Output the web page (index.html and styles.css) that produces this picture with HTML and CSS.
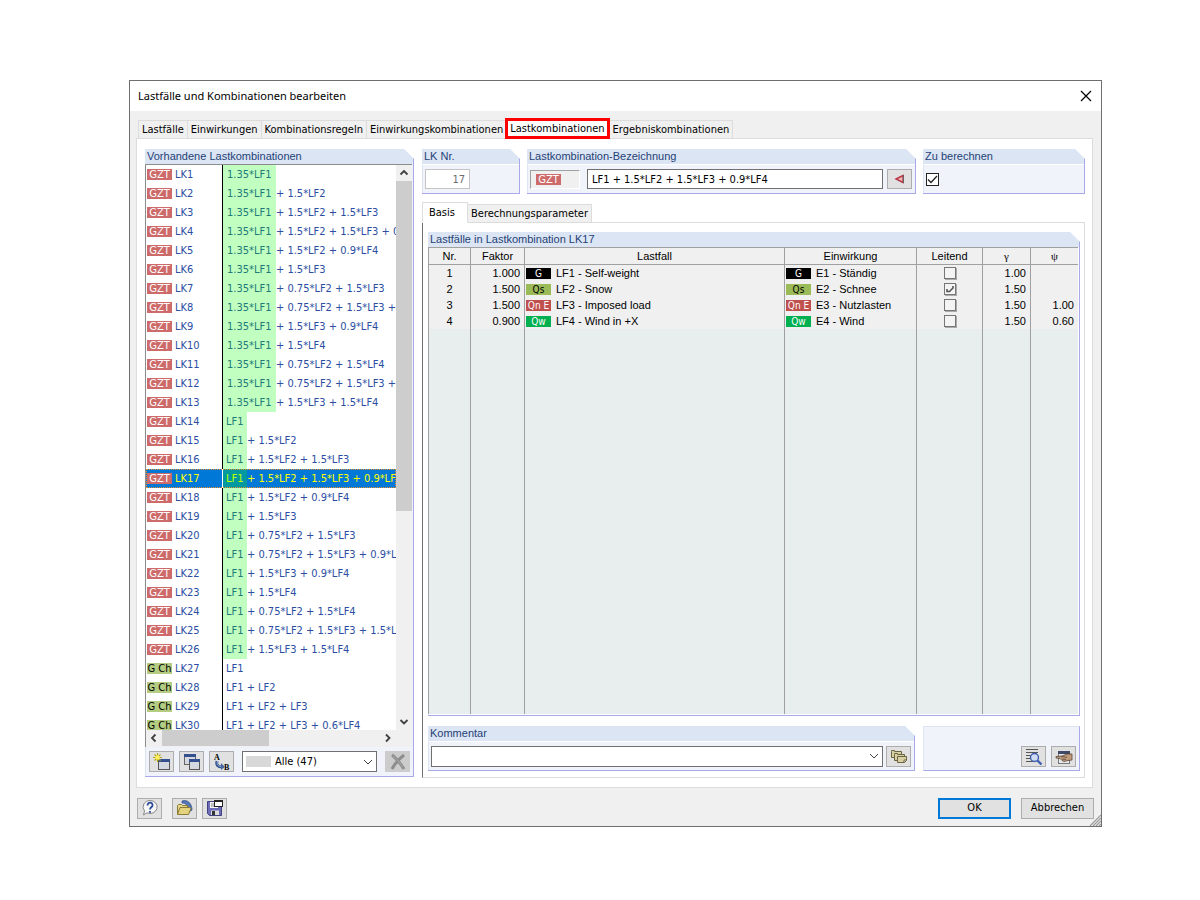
FILE: index.html
```html
<!DOCTYPE html>
<html lang="de">
<head>
  <meta charset="UTF-8">
  <meta name="viewport" content="width=device-width, initial-scale=1.0">
  <title>Lastfälle und Kombinationen bearbeiten</title>
  <link rel="stylesheet" href="styles.css">
</head>
<body>
  <main class="dialog">
    <header class="titlebar">
      <h1>Lastfälle und Kombinationen bearbeiten</h1>
      <button class="close-btn" aria-label="Schließen">
        <svg width="12" height="12" viewBox="0 0 12 12"><path d="M1 1l10 10M11 1L1 11" stroke="#000" stroke-width="1.2" fill="none"/></svg>
      </button>
    </header>

    <nav class="tabs main-tabs">
      <button class="tab">Lastfälle</button>
      <button class="tab">Einwirkungen</button>
      <button class="tab">Kombinationsregeln</button>
      <button class="tab">Einwirkungskombinationen</button>
      <button class="tab marked">Lastkombinationen</button>
      <button class="tab">Ergebniskombinationen</button>
    </nav>

    <div class="panel">
      <section class="group list-group">
        <h2>Vorhandene Lastkombinationen</h2>
        <div class="list-frame">
          <ul id="combo-list" class="combo-list"></ul>
          <div class="scroll-y">
            <svg class="arrow" viewBox="0 0 16 16"><path d="M4.500 9.500L8 6l3.500 3.500" /></svg>
            <div class="track-y"><div class="thumb-y"></div></div>
            <svg class="arrow" viewBox="0 0 16 16"><path d="M4.500 6L8 9.500 11.500 6" /></svg>
          </div>
          <div class="scroll-x">
            <svg class="arrow" viewBox="0 0 16 16"><path d="M9.500 4.500L6 8l3.500 3.500" /></svg>
            <div class="track-x"><div class="thumb-x"></div></div>
            <svg class="arrow" viewBox="0 0 16 16"><path d="M6 4.500L9.500 8 6 11.500" /></svg>
          </div>
        </div>
        <div class="toolbar">
          <button class="icon-btn" aria-label="Neu">
            <svg width="18" height="18" viewBox="0 0 18 18"><rect x="5.500" y="6.500" width="11" height="10" fill="#d4d8e0" stroke="#555"/><path d="M6 6h11v3H6z" fill="#34508e"/><path d="M4.500 0v9M0 4.500h9M1.500 1.500l6 6M7.500 1.500l-6 6" stroke="#b8a818" stroke-width="1.200"/><circle cx="4.500" cy="4.500" r="2.200" fill="#fff25a"/></svg>
          </button>
          <button class="icon-btn" aria-label="Kopieren">
            <svg width="18" height="18" viewBox="0 0 18 18"><rect x="1.500" y="1.500" width="11" height="10" fill="#d4d8e0" stroke="#666"/><path d="M1 1h12v3H1z" fill="#34508e"/><rect x="6.500" y="6.500" width="10" height="10" fill="#d4d8e0" stroke="#555"/><path d="M6 6h11v3H6z" fill="#34508e"/></svg>
          </button>
          <button class="icon-btn" aria-label="Umnummerieren">
            <svg width="18" height="18" viewBox="0 0 18 18"><text x="1" y="7" class="svg-letter">A</text><text x="11" y="17" class="svg-letter">B</text><path d="M4 8c-1 4 1 6 5 6" fill="none" stroke="#35548e" stroke-width="3"/><path d="M4.500 8c-1 4 1 5.500 4.500 5.500" fill="none" stroke="#9db8e4" stroke-width="1"/><path d="M8 10l4 4-4 3z" fill="#45689f"/></svg>
          </button>
          <select class="filter" aria-label="Filter">
            <option>Alle (47)</option>
          </select>
          <button class="icon-btn delete-btn" aria-label="Löschen" disabled>
            <svg width="18" height="18" viewBox="0 0 18 18"><path d="M3 2c4 3 8 8 12 14M15 2C10 6 6 10 3 16" fill="none" stroke="#8d8d8d" stroke-width="3"/><path d="M4 3c4 3 7 7 10 11" fill="none" stroke="#aaa"/></svg>
          </button>
        </div>
      </section>

      <div class="detail">
        <div class="detail-top">
          <section class="group nr-group">
            <h2><label for="nr">LK Nr.</label></h2>
            <div class="group-body">
              <input id="nr" class="nr-input" value="17" disabled>
            </div>
          </section>
          <section class="group name-group">
            <h2><label for="name">Lastkombination-Bezeichnung</label></h2>
            <div class="group-body">
              <div class="type-box"><span class="badge gzt">GZT</span></div>
              <input id="name" class="name-input" value="LF1 + 1.5*LF2 + 1.5*LF3 + 0.9*LF4">
              <button class="icon-btn small-btn" aria-label="Übernehmen">
                <svg width="12" height="12" viewBox="0 0 12 12"><path d="M2 6l7-3.500v7z" fill="#f0b8b8" stroke="#b83a48" stroke-width="1.400"/><path d="M9.500 2v8" stroke="#666"/></svg>
              </button>
            </div>
          </section>
          <section class="group calc-group">
            <h2><label for="calc">Zu berechnen</label></h2>
            <div class="group-body">
              <input id="calc" class="check" type="checkbox" checked>
            </div>
          </section>
        </div>

        <nav class="tabs sub-tabs">
          <button class="tab active">Basis</button>
          <button class="tab">Berechnungsparameter</button>
        </nav>

        <div class="sub-panel">
          <section class="group table-group">
            <h2>Lastfälle in Lastkombination LK17</h2>
            <div class="table-wrap">
              <table class="case-table">
                <colgroup>
                  <col class="col-nr"><col class="col-factor"><col><col class="col-action"><col class="col-lead"><col class="col-gamma"><col class="col-psi">
                </colgroup>
                <thead>
                  <tr><th>Nr.</th><th>Faktor</th><th>Lastfall</th><th>Einwirkung</th><th>Leitend</th><th class="greek">γ</th><th class="greek">ψ</th></tr>
                </thead>
                <tbody>
                  <tr>
                    <td class="center">1</td><td class="num">1.000</td>
                    <td><span class="badge g">G</span>LF1 - Self-weight</td>
                    <td><span class="badge g">G</span>E1 - Ständig</td>
                    <td class="center"><input class="flat-check" type="checkbox" aria-label="Leitend 1"></td>
                    <td class="num">1.00</td><td class="num"></td>
                  </tr>
                  <tr>
                    <td class="center">2</td><td class="num">1.500</td>
                    <td><span class="badge qs">Qs</span>LF2 - Snow</td>
                    <td><span class="badge qs">Qs</span>E2 - Schnee</td>
                    <td class="center"><input class="flat-check" type="checkbox" aria-label="Leitend 2" checked></td>
                    <td class="num">1.50</td><td class="num"></td>
                  </tr>
                  <tr>
                    <td class="center">3</td><td class="num">1.500</td>
                    <td><span class="badge qn">Qn E</span>LF3 - Imposed load</td>
                    <td><span class="badge qn">Qn E</span>E3 - Nutzlasten</td>
                    <td class="center"><input class="flat-check" type="checkbox" aria-label="Leitend 3"></td>
                    <td class="num">1.50</td><td class="num">1.00</td>
                  </tr>
                  <tr>
                    <td class="center">4</td><td class="num">0.900</td>
                    <td><span class="badge qw">Qw</span>LF4 - Wind in +X</td>
                    <td><span class="badge qw">Qw</span>E4 - Wind</td>
                    <td class="center"><input class="flat-check" type="checkbox" aria-label="Leitend 4"></td>
                    <td class="num">1.50</td><td class="num">0.60</td>
                  </tr>
                  <tr class="filler"><td></td><td></td><td></td><td></td><td></td><td></td><td></td></tr>
                </tbody>
              </table>
            </div>
          </section>

          <div class="detail-bottom">
            <section class="group comment-group">
              <h2><label for="comment">Kommentar</label></h2>
              <div class="group-body">
                <select id="comment" class="comment-select"><option></option></select>
                <button class="icon-btn small-btn" aria-label="Kommentare">
                  <svg width="18" height="18" viewBox="0 0 18 18" fill="#d8cfa4" stroke="#6b6440"><path d="M1.500 4.500v-1h3v1h7v6h-10z"/><path d="M4.500 7.500v-1h3v1h7v6h-10z"/><path d="M7.500 9.500h9v4l-2 2h-7z"/><path d="M16 13h-2v2" fill="#fff"/></svg>
                </button>
              </div>
            </section>
            <section class="tool-group">
              <button class="icon-btn" aria-label="Details">
                <svg width="18" height="18" viewBox="0 0 18 18"><path d="M1 1.500h12M1 4.500h12M1 7.500h5M1 10.500h4M1 13.500h7" stroke="#555"/><path d="M12 12l4.500 4.500" stroke="#3f5fae" stroke-width="2.400"/><circle cx="9.500" cy="9.500" r="4" fill="#cfdcf2" stroke="#3f5fae" stroke-width="1.400"/></svg>
              </button>
              <button class="icon-btn" aria-label="Einstellungen">
                <svg width="18" height="18" viewBox="0 0 18 18"><rect x="3.500" y="3.500" width="11" height="12" fill="#e8eaf0" stroke="#777"/><path d="M3 3h12v3H3z" fill="#3e4a66"/><path d="M17 6v6l-4 .5-4 1-2-1-2-2-4-.5V8.500l6-.5 5-2z" fill="#c09a7c" stroke="#5c4636" stroke-width=".8"/><path d="M6 8.500l6 .8M7 11l4 .5" stroke="#5c4636" stroke-width=".8"/></svg>
              </button>
            </section>
          </div>
        </div>
      </div>
    </div>

    <footer class="footer">
      <button class="icon-btn help-btn" aria-label="Hilfe">
        <svg width="18" height="18" viewBox="0 0 18 18"><path d="M9 1.500a7 6.500 0 1 1-3 12.300L2.500 16l1-4A6.500 6.500 0 0 1 9 1.500z" fill="#f7f7f7" stroke="#888"/><path d="M6.500 6.500c0-4 5.500-3.500 5 0-.3 1.800-2.500 1.800-2.500 4M9 12v1.800" fill="none" stroke="#2c4a96" stroke-width="1.800"/></svg>
      </button>
      <button class="icon-btn" aria-label="Öffnen">
        <svg width="18" height="18" viewBox="0 0 18 18"><path d="M6 2c6-2 10 3 10 9l-3 2C13 7 10 4 6 4z" fill="#5577b8" stroke="#304c84" stroke-width=".7"/><path d="M1.500 15V6.500l1-1h3l1 1h5v2" fill="#e6d688" stroke="#8a7a34"/><path d="M1.500 15.500L4 8.500h9.500l1.500 1-2.500 6z" fill="#e3d27e" stroke="#8a7a34"/></svg>
      </button>
      <button class="icon-btn" aria-label="Speichern">
        <svg width="18" height="18" viewBox="0 0 18 18"><path d="M1.500 2.500h14v14H3.500l-2-2z" fill="#6c6cb8" stroke="#414180"/><path d="M4 3h8v6H4z" fill="#f4f4f4"/><path d="M5 5h6M5 7h6" stroke="#888"/><path d="M5 11.500h8V16H5z" fill="#ddd"/><path d="M6 12h3v4H6z" fill="#333"/><rect x="8.500" y="1.500" width="8" height="6" fill="#fff" stroke="#222"/><path d="M8 1h9v2H8z" fill="#222"/></svg>
      </button>
      <span class="spacer"></span>
      <button class="text-btn primary">OK</button>
      <button class="text-btn">Abbrechen</button>
      <svg class="grip" width="12" height="12" viewBox="0 0 12 12"><path d="M1 12L12 1M4 12l8-8M7 12l5-5M10 12l2-2" stroke="#999" stroke-width="1.200"/></svg>
    </footer>
  </main>
  <script src="script.js"></script>
</body>
</html>
```
FILE: styles.css
```css
* {
  box-sizing: border-box;
}

body {
  margin: 0;
  height: 100vh;
  min-height: 600px;
  padding: 80px 98px 73px 129px;
  background: #fff;
  color: #000;
  font: 11px/16px "DejaVu Sans Condensed", Tahoma, sans-serif;
}

h1, h2, ul {
  margin: 0;
  padding: 0;
  font-weight: normal;
}

button, input, select {
  font: inherit;
  color: inherit;
  margin: 0;
}

svg {
  display: block;
}

.dialog {
  display: flex;
  flex-direction: column;
  height: 100%;
  border: 1px solid #6f6f6f;
  background: #f0f0f0;
}

.titlebar {
  display: flex;
  align-items: center;
  justify-content: space-between;
  height: 30px;
  padding: 0 4px 0 8px;
  background: #fff;
}

.titlebar h1 {
  font: 11px/16px "Noto Sans", sans-serif;
}

.close-btn {
  padding: 5px;
  border: none;
  background: none;
}

/* tabs */
.tabs {
  display: flex;
  align-items: flex-end;
}

.tab {
  height: 18px;
  padding: 0 3px;
  border: 1px solid #dcdcdc;
  border-bottom: none;
  border-left-width: 0;
  background: #f0f0f0;
  line-height: 16px;
  white-space: nowrap;
}

.tab:first-child {
  border-left-width: 1px;
}

.main-tabs {
  height: 27px;
  padding-left: 8px;
}

.main-tabs .marked {
  position: relative;
  height: 21px;
  margin: 0 0 -1px -2px;
  padding: 0 2px;
  border: 3px solid #f00;
  background: #fff;
  line-height: 14px;
}

.panel {
  display: flex;
  flex: 1;
  gap: 8px;
  min-height: 0;
  margin: 0 8px 0 6px;
  padding: 10px 7px 9px 8px;
  border: 1px solid #dcdcdc;
  background: #fff;
}

/* groups with a cut corner */
.group {
  display: flex;
  flex-direction: column;
  min-height: 0;
  border-right: 1px solid #a9a9ea;
  border-bottom: 1px solid #a9a9ea;
  background: #f0f3f9;
  clip-path: polygon(0 0, calc(100% - 10px) 0, 100% 10px, 100% 100%, 0 100%);
}

.group h2 {
  height: 15px;
  flex: none;
  padding-left: 2px;
  background: #dce5f4;
  color: #1e4275;
  font: 11px/15px "Liberation Sans", Arial, sans-serif;
}

.group-body {
  display: flex;
  align-items: center;
  height: 29px;
  padding: 0 3px;
  border-top: 1px solid #fff;
  border-left: 1px solid #dce5f4;
}

/* combination list */
.list-group {
  width: 269px;
  flex: none;
  margin-bottom: 1px;
}

.list-frame {
  display: grid;
  grid-template: minmax(0, 1fr) 17px / minmax(0, 1fr) 16px;
  flex: 1;
  min-height: 0;
  margin-right: 1px;
  border-top: 1px solid #8c8c8c;
  border-left: 1px solid #8c8c8c;
  background: #fff;
}

.combo-list {
  overflow: hidden;
  list-style: none;
  color: #2b4ea2;
}

.combo-list li {
  display: flex;
  align-items: center;
  height: 19px;
  white-space: pre;
}

.combo-list .badge {
  margin: 0 3px 0 1px;
}

.combo-list .no {
  flex: none;
  width: 47px;
}

.combo-list .expr {
  display: flex;
  flex: 1;
  align-items: center;
  align-self: stretch;
  min-width: 0;
  border-left: 1px solid #000;
}

.combo-list .plain {
  padding-left: 3px;
}

.combo-list .hit {
  align-self: stretch;
  flex: none;
  width: 24px;
  padding-left: 3px;
  background: #c0ffc0;
  color: #207a78;
  line-height: 19px;
}

.combo-list .hit.wide {
  width: 53px;
  padding-left: 4px;
}

.combo-list .selected {
  background: #0078d7;
  color: #ff0;
  outline: 1px dotted #e89030;
  outline-offset: -1px;
}

.combo-list .selected .expr {
  border-left-color: #fff;
}

.combo-list .selected .hit {
  background: #0099a0;
  color: #bfff00;
}

.badge {
  display: inline-block;
  flex: none;
  width: 25px;
  height: 11px;
  line-height: 11px;
  text-align: center;
  white-space: nowrap;
}

.gzt {
  background: #cd6b6b;
  color: #fff;
}

.gch {
  background: #b4cc82;
  color: #000;
}

.g {
  background: #000;
  color: #fff;
}

.qs {
  background: #9bbb59;
  color: #000;
}

.qn {
  background: #c0504d;
  color: #fff;
}

.qw {
  background: #00b050;
  color: #fff;
}

/* scroll bars */
.scroll-y {
  display: flex;
  flex-direction: column;
  background: #f0f0f0;
}

.scroll-x {
  display: flex;
  grid-column: 1 / 2;
  background: #f0f0f0;
}

.list-frame::after {
  content: "";
  background: #f0f0f0;
}

.arrow {
  width: 16px;
  height: 16px;
  flex: none;
  fill: none;
  stroke: #404040;
  stroke-width: 1.8;
}

.track-y,
.track-x {
  flex: 1;
}

.thumb-y {
  height: 62%;
  background: #cdcdcd;
}

.thumb-x {
  width: 49%;
  height: 16px;
  background: #cdcdcd;
}

/* buttons */
.toolbar {
  display: flex;
  align-items: center;
  gap: 5px;
  height: 29px;
  padding: 0 3px;
  border-left: 1px solid #dce5f4;
}

.icon-btn {
  display: flex;
  align-items: center;
  justify-content: center;
  flex: none;
  width: 25px;
  height: 21px;
  padding: 0;
  border: 1px solid #adadad;
  background: #e1e1e1;
}

.svg-letter {
  font: bold 8px "Liberation Serif", serif;
}

.delete-btn {
  margin-left: auto;
  border-color: #ccc;
  background: #ccc;
}

select {
  appearance: none;
  border: 1px solid #707070;
  border-radius: 0;
  background: #fff url("data:image/svg+xml,%3Csvg xmlns='http://www.w3.org/2000/svg' width='10' height='6'%3E%3Cpath d='M1 1l4 4 4-4' fill='none' stroke='%23444'/%3E%3C/svg%3E") no-repeat right 3px center;
}

.filter {
  width: 135px;
  height: 21px;
  margin-left: 3px;
  padding: 0 16px 0 32px;
  background-image: url("data:image/svg+xml,%3Csvg xmlns='http://www.w3.org/2000/svg' width='10' height='6'%3E%3Cpath d='M1 1l4 4 4-4' fill='none' stroke='%23444'/%3E%3C/svg%3E"), linear-gradient(#d8d8d8, #d8d8d8);
  background-position: right 3px center, 3px center;
  background-size: auto, 25px 11px;
}

/* detail area */
.detail {
  display: flex;
  flex: 1;
  flex-direction: column;
  min-width: 0;
}

.detail-top {
  display: flex;
  gap: 7px;
}

.nr-group {
  width: 98px;
}

.name-group {
  flex: 1;
}

.calc-group {
  width: 162px;
}

.nr-input {
  width: 45px;
  height: 20px;
  padding: 0 4px;
  border: 1px solid #c4c4c4;
  background: #fff;
  color: #6d6d6d;
  text-align: right;
}

.nr-group .group-body,
.calc-group .group-body {
  padding: 0 2px;
}

.type-box {
  display: flex;
  align-items: center;
  width: 50px;
  height: 19px;
  padding-left: 5px;
  border: 1px solid #fff;
  border-top-color: #a0a0a0;
  border-left-color: #a0a0a0;
  background: #f0f0f0;
}

.name-group .group-body {
  padding-left: 2px;
}

.name-input {
  flex: 1;
  min-width: 0;
  height: 20px;
  margin: 0 4px 0 7px;
  padding: 0 4px;
  border: 1px solid #707070;
}

.name-group .small-btn {
  height: 20px;
}

.check {
  appearance: none;
  width: 13px;
  height: 13px;
  border: 1px solid #222;
  background: #fff;
}

.check:checked {
  background: #fff url("data:image/svg+xml,%3Csvg xmlns='http://www.w3.org/2000/svg' width='11' height='11'%3E%3Cpath d='M1 5.500l3 3 6-6.500' fill='none' stroke='%23222' stroke-width='1.300'/%3E%3C/svg%3E");
}

.sub-tabs {
  position: relative;
  height: 20px;
  margin-top: 8px;
}

.sub-tabs .tab {
  height: 19px;
  margin-bottom: -1px;
  border-bottom: 1px solid #dcdcdc;
}

.sub-tabs .active {
  width: 46px;
  height: 21px;
  padding: 0 6px;
  border-bottom-color: #fff;
  background: #fff;
  text-align: left;
}

.sub-panel {
  display: flex;
  flex: 1;
  flex-direction: column;
  gap: 10px;
  min-height: 0;
  padding: 9px 4px 6px 5px;
  border: 1px solid #dcdcdc;
  border-left-color: #6f6f6f;
}

.table-group {
  flex: 1;
}

.table-wrap {
  flex: 1;
  min-height: 0;
  padding: 0 1px 1px 0;
  background: #fff;
}

.case-table {
  width: 100%;
  height: 100%;
  table-layout: fixed;
  border-collapse: separate;
  border-spacing: 0;
  border-left: 1px solid #a0a0a0;
  background: #f0f0f0;
  font: 11px/16px "Liberation Sans", Arial, sans-serif;
}

.col-nr {
  width: 42px;
}

.col-factor {
  width: 54px;
}

.col-action {
  width: 132px;
}

.col-lead {
  width: 66px;
}

.col-gamma {
  width: 48px;
}

.col-psi {
  width: 47px;
}

.case-table th {
  height: 18px;
  padding: 0;
  border-top: 1px solid #a0a0a0;
  border-bottom: 1px solid #a0a0a0;
  font-weight: normal;
}

.case-table td {
  height: 16px;
  padding: 0 1px;
}

.case-table th:not(:last-child),
.case-table td:not(:last-child) {
  border-right: 1px solid #a0a0a0;
}

.case-table .greek {
  font-family: "Liberation Serif", serif;
}

.case-table .center {
  text-align: center;
}

.case-table .num {
  padding-right: 4px;
  text-align: right;
}

.case-table .badge {
  margin-right: 5px;
  font-family: "DejaVu Sans Condensed", sans-serif;
  font-size: 10px;
}

.case-table .filler td {
  height: auto;
  background: #e8eded;
}

.flat-check {
  display: block;
  appearance: none;
  width: 12px;
  height: 12px;
  margin: 0 auto;
  border: 1px solid #777;
  background: #f4f4f4;
  box-shadow: 1px 1px 0 #aaa;
}

.flat-check:checked {
  background: #f4f4f4 url("data:image/svg+xml,%3Csvg xmlns='http://www.w3.org/2000/svg' width='10' height='10'%3E%3Cpath d='M2 5v2.500h2.500L8 4V2' fill='none' stroke='%23555' stroke-width='1.600'/%3E%3C/svg%3E");
}

.detail-bottom {
  display: flex;
  gap: 8px;
}

.comment-group {
  flex: 1;
}

.comment-select {
  flex: 1;
  min-width: 0;
  height: 21px;
}

.comment-group .group-body {
  padding-left: 2px;
}

.comment-group .small-btn {
  margin-left: 3px;
}

.tool-group {
  display: flex;
  align-items: flex-end;
  justify-content: flex-end;
  gap: 5px;
  width: 157px;
  padding: 0 3px 3px;
  border: 1px solid #a9a9ea;
  border-top-color: #dce5f4;
  border-left-color: #dce5f4;
  background: #f0f3f9;
}

.footer {
  position: relative;
  display: flex;
  align-items: center;
  gap: 5px;
  height: 38px;
  padding: 2px 7px 0;
}

.help-btn {
  margin-right: 5px;
}

.spacer {
  flex: 1;
}

.text-btn {
  width: 73px;
  height: 21px;
  padding: 0;
  border: 1px solid #adadad;
  background: #e1e1e1;
}

.primary {
  margin-right: 5px;
  border: 2px solid #0078d7;
}

.grip {
  position: absolute;
  right: 0;
  bottom: 0;
}
```
FILE: script.js
```js
const ultimate = [
  "1.35*LF1", "1.35*LF1 + 1.5*LF2", "1.35*LF1 + 1.5*LF2 + 1.5*LF3",
  "1.35*LF1 + 1.5*LF2 + 1.5*LF3 + 0.9*LF4", "1.35*LF1 + 1.5*LF2 + 0.9*LF4",
  "1.35*LF1 + 1.5*LF3", "1.35*LF1 + 0.75*LF2 + 1.5*LF3",
  "1.35*LF1 + 0.75*LF2 + 1.5*LF3 + 0.9*LF4", "1.35*LF1 + 1.5*LF3 + 0.9*LF4",
  "1.35*LF1 + 1.5*LF4", "1.35*LF1 + 0.75*LF2 + 1.5*LF4",
  "1.35*LF1 + 0.75*LF2 + 1.5*LF3 + 1.5*LF4", "1.35*LF1 + 1.5*LF3 + 1.5*LF4",
  "LF1", "LF1 + 1.5*LF2", "LF1 + 1.5*LF2 + 1.5*LF3",
  "LF1 + 1.5*LF2 + 1.5*LF3 + 0.9*LF4", "LF1 + 1.5*LF2 + 0.9*LF4",
  "LF1 + 1.5*LF3", "LF1 + 0.75*LF2 + 1.5*LF3",
  "LF1 + 0.75*LF2 + 1.5*LF3 + 0.9*LF4", "LF1 + 1.5*LF3 + 0.9*LF4",
  "LF1 + 1.5*LF4", "LF1 + 0.75*LF2 + 1.5*LF4",
  "LF1 + 0.75*LF2 + 1.5*LF3 + 1.5*LF4", "LF1 + 1.5*LF3 + 1.5*LF4"
];
const service = ["LF1", "LF1 + LF2", "LF1 + LF2 + LF3", "LF1 + LF2 + LF3 + 0.6*LF4"];

const list = document.getElementById("combo-list");

function addSpan(parent, className, text) {
  const span = document.createElement("span");
  span.className = className;
  span.textContent = text;
  parent.appendChild(span);
  return span;
}

ultimate.concat(service).forEach((formula, index) => {
  const isUltimate = index < ultimate.length;
  const item = document.createElement("li");
  if (index === 16) {
    item.className = "selected";
  }
  addSpan(item, isUltimate ? "badge gzt" : "badge gch", isUltimate ? "GZT" : "G Ch");
  addSpan(item, "no", "LK" + (index + 1));

  const expr = addSpan(item, "expr", "");
  if (isUltimate) {
    // permanent load is highlighted
    const end = formula.indexOf("LF1") + 3;
    addSpan(expr, end > 3 ? "hit wide" : "hit", formula.slice(0, end));
    addSpan(expr, "rest", formula.slice(end).trim());
  } else {
    addSpan(expr, "plain", formula);
  }
  list.appendChild(item);
});
```
